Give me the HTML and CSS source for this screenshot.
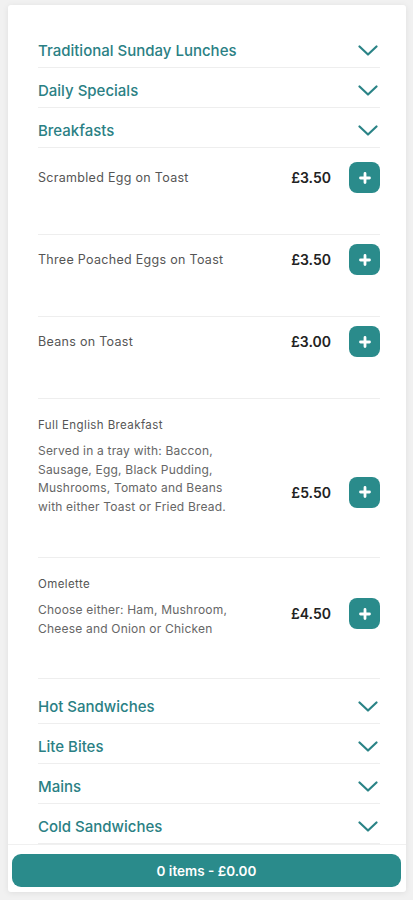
FILE: index.html
```html
<!DOCTYPE html>
<html lang="en">
<head>
  <meta charset="UTF-8">
  <meta name="viewport" content="width=device-width, initial-scale=1.0">
  <title>Menu</title>
  <link rel="stylesheet" href="styles.css">
</head>
<body>
  <div class="menu-card">
    <div class="menu-list">
      <section class="category">
        <button class="category-head">
          <span>Traditional Sunday Lunches</span>
          <svg class="chevron" viewBox="0 0 20 11"><path d="M1.5 1.5 L10 9.5 L18.5 1.5"/></svg>
        </button>
      </section>
      <section class="category">
        <button class="category-head">
          <span>Daily Specials</span>
          <svg class="chevron" viewBox="0 0 20 11"><path d="M1.5 1.5 L10 9.5 L18.5 1.5"/></svg>
        </button>
      </section>
      <section class="category open">
        <button class="category-head">
          <span>Breakfasts</span>
          <svg class="chevron" viewBox="0 0 20 11"><path d="M1.5 1.5 L10 9.5 L18.5 1.5"/></svg>
        </button>
        <ul class="items">
          <li class="item">
            <div class="item-info">
              <div class="item-name">Scrambled Egg on Toast</div>
            </div>
            <div class="item-action">
              <span class="price">£3.50</span>
              <button class="add-btn"><svg viewBox="0 0 12 12"><path d="M6 1.5 V10.5 M1.5 6 H10.5"/></svg></button>
            </div>
          </li>
          <li class="item">
            <div class="item-info">
              <div class="item-name">Three Poached Eggs on Toast</div>
            </div>
            <div class="item-action">
              <span class="price">£3.50</span>
              <button class="add-btn"><svg viewBox="0 0 12 12"><path d="M6 1.5 V10.5 M1.5 6 H10.5"/></svg></button>
            </div>
          </li>
          <li class="item">
            <div class="item-info">
              <div class="item-name">Beans on Toast</div>
            </div>
            <div class="item-action">
              <span class="price">£3.00</span>
              <button class="add-btn"><svg viewBox="0 0 12 12"><path d="M6 1.5 V10.5 M1.5 6 H10.5"/></svg></button>
            </div>
          </li>
          <li class="item has-desc">
            <div class="item-info">
              <div class="item-name">Full English Breakfast</div>
              <p class="item-desc">Served in a tray with: Baccon, Sausage, Egg, Black Pudding, Mushrooms, Tomato and Beans with&nbsp;either Toast or Fried Bread.</p>
            </div>
            <div class="item-action">
              <span class="price">£5.50</span>
              <button class="add-btn"><svg viewBox="0 0 12 12"><path d="M6 1.5 V10.5 M1.5 6 H10.5"/></svg></button>
            </div>
          </li>
          <li class="item has-desc">
            <div class="item-info">
              <div class="item-name">Omelette</div>
              <p class="item-desc">Choose either: Ham, Mushroom, Cheese and Onion or Chicken</p>
            </div>
            <div class="item-action">
              <span class="price">£4.50</span>
              <button class="add-btn"><svg viewBox="0 0 12 12"><path d="M6 1.5 V10.5 M1.5 6 H10.5"/></svg></button>
            </div>
          </li>
        </ul>
      </section>
      <section class="category">
        <button class="category-head">
          <span>Hot Sandwiches</span>
          <svg class="chevron" viewBox="0 0 20 11"><path d="M1.5 1.5 L10 9.5 L18.5 1.5"/></svg>
        </button>
      </section>
      <section class="category">
        <button class="category-head">
          <span>Lite Bites</span>
          <svg class="chevron" viewBox="0 0 20 11"><path d="M1.5 1.5 L10 9.5 L18.5 1.5"/></svg>
        </button>
      </section>
      <section class="category">
        <button class="category-head">
          <span>Mains</span>
          <svg class="chevron" viewBox="0 0 20 11"><path d="M1.5 1.5 L10 9.5 L18.5 1.5"/></svg>
        </button>
      </section>
      <section class="category">
        <button class="category-head">
          <span>Cold Sandwiches</span>
          <svg class="chevron" viewBox="0 0 20 11"><path d="M1.5 1.5 L10 9.5 L18.5 1.5"/></svg>
        </button>
      </section>
    </div>
    <div class="basket-bar">
      <button class="basket-btn">0 items - £0.00</button>
    </div>
  </div>
</body>
</html>
```

FILE: styles.css
```css
body {
  font-family: "Inter", "Open Sans", sans-serif;
  background-color: #f1f1f1;
  margin: 0;
  padding: 5px 7px 10px 8px;
}

.menu-card {
  background: #ffffff;
  box-shadow: 0px 1px 6px rgba(0, 0, 0, 0.08);
  border-radius: 3px;
}

.menu-list {
  padding: 23px 26px 0 30px;
}

.category-head {
  display: flex;
  justify-content: space-between;
  align-items: center;
  width: 100%;
  height: 40px;
  padding: 5px 2px 0 0;
  background: none;
  border: none;
  border-bottom: 1px solid #eeeeee;
  font-family: inherit;
  font-size: 15px;
  font-weight: 500;
  color: #2a8084;
  text-align: left;
  cursor: pointer;
}

.chevron {
  width: 20px;
  height: 11px;
  fill: none;
  stroke: #2a8386;
  stroke-width: 2.2;
  stroke-linecap: round;
  stroke-linejoin: round;
}

.items {
  list-style: none;
  margin: 0;
  padding: 5px 0;
}

.item {
  display: flex;
  align-items: center;
  padding: 9px 0 41px;
  border-bottom: 1px solid #eeeeee;
}

.item.has-desc {
  align-items: flex-end;
  padding: 18px 0 40px;
}

.item-info {
  flex: 1;
  padding-right: 36px;
}

.item-name {
  font-size: 12.5px;
  letter-spacing: 0.3px;
  color: #555555;
}

.has-desc .item-name {
  font-size: 11.5px;
  letter-spacing: 0.4px;
  line-height: 16px;
}

.item-desc {
  margin: 9px 0 0;
  font-size: 12px;
  letter-spacing: 0.2px;
  line-height: 18.7px;
  color: #666666;
}

.item-action {
  display: flex;
  align-items: center;
  gap: 18px;
}

.has-desc .item-action {
  margin-bottom: 9px;
}

.price {
  font-size: 14px;
  font-weight: 600;
  color: #222222;
}

.add-btn {
  width: 31px;
  height: 31px;
  padding: 0;
  border: none;
  border-radius: 8px;
  background-color: #2a8b8b;
  display: flex;
  align-items: center;
  justify-content: center;
  cursor: pointer;
}

.add-btn svg {
  width: 12px;
  height: 12px;
  fill: none;
  stroke: #ffffff;
  stroke-width: 2.8;
  stroke-linecap: round;
}

.basket-bar {
  padding: 9px 5px 5px 4px;
  border-top: 1px solid #f0f0f0;
}

.basket-btn {
  width: 100%;
  height: 33px;
  border: none;
  border-radius: 9px;
  background-color: #2a8b8b;
  color: #ffffff;
  font-family: inherit;
  font-size: 13.5px;
  font-weight: 600;
  cursor: pointer;
}
```
